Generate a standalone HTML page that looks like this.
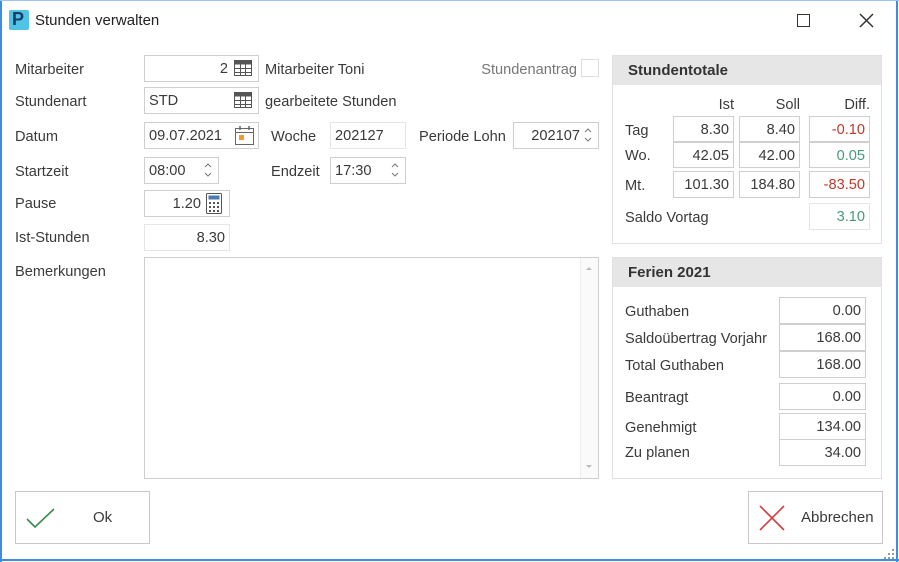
<!DOCTYPE html>
<html><head><meta charset="utf-8"><style>
*{box-sizing:border-box;margin:0;padding:0}
body{width:899px;height:562px;background:#fff;position:relative;overflow:hidden;font-family:"Liberation Sans",sans-serif;font-size:14.6px;color:#3a3a3a}
.a{position:absolute;white-space:nowrap}
.l{position:absolute;line-height:18px;white-space:nowrap;margin-top:1px}
.f{position:absolute;border:1px solid #cfcfcf;background:#fff;line-height:20px;padding:3px 4px 0;font-size:14.6px;color:#3a3a3a;white-space:nowrap}
.r{text-align:right}
.lt{border-color:#e6e6e6}
.panel{position:absolute;border:1px solid #e0e0e0;background:#fff}
.ph{position:absolute;left:0;right:0;top:0;height:29px;background:#e6e6e6;font-weight:bold;font-size:15px;padding-left:15px;line-height:29px;color:#333}
.btn{position:absolute;border:1px solid #c8c8c8;background:#fff}
.spin{position:absolute;right:6px;top:4px;width:8px;height:16px}
</style></head><body>
<div class="a" style="left:0;top:0;width:2px;height:562px;background:#3c8ee0"></div>
<div class="a" style="left:896px;top:0;width:2px;height:562px;background:#3c8ee0"></div>
<div class="a" style="left:0;top:559px;width:899px;height:2px;background:#3c8ee0"></div>
<div class="a" style="left:0;top:0;width:899px;height:1px;background:#9cc4ee"></div>

<div class="a" style="left:9px;top:10px;width:20px;height:20px;background:#50c4e4;border-radius:2px"></div>
<div class="a" style="left:12px;top:8px;font-size:18px;font-weight:bold;color:#1b3b6a;line-height:22px">P</div>
<div class="a" style="left:35px;top:12px;font-size:15px;color:#222">Stunden verwalten</div>
<div class="a" style="left:797px;top:14px;width:13px;height:13px;border:1.5px solid #333"></div>
<svg class="a" style="left:859px;top:13px" width="15" height="15"><path d="M1 1L14 14M14 1L1 14" stroke="#333" stroke-width="1.5"/></svg>

<div class="l" style="left:15px;top:60px">Mitarbeiter</div>
<div class="l" style="left:15px;top:92px">Stundenart</div>
<div class="l" style="left:15px;top:127px">Datum</div>
<div class="l" style="left:15px;top:162px">Startzeit</div>
<div class="l" style="left:15px;top:194px">Pause</div>
<div class="l" style="left:15px;top:228px">Ist-Stunden</div>
<div class="l" style="left:15px;top:262px">Bemerkungen</div>

<div class="f r" style="left:144px;top:55px;width:115px;height:27px;padding-right:30px">2</div>
<div class="f" style="left:144px;top:87px;width:115px;height:27px">STD</div>
<div class="f" style="left:144px;top:122px;width:115px;height:27px">09.07.2021</div>
<div class="f" style="left:144px;top:157px;width:75px;height:27px">08:00<svg class="spin"><path d="M1 5L4 2L7 5M1 11L4 14L7 11" stroke="#777" fill="none"/></svg></div>
<div class="f r" style="left:144px;top:190px;width:86px;height:27px;padding-right:28px">1.20</div>
<div class="f r lt" style="left:144px;top:224px;width:86px;height:27px">8.30</div>
<div class="f" style="left:144px;top:257px;width:455px;height:222px"></div>
<div class="a" style="left:580px;top:258px;width:18px;height:220px;background:#fafafa;border-left:1px solid #eee"></div>
<svg class="a" style="left:584px;top:262px" width="10" height="210"><path d="M2 8L5 5L8 8" fill="#bbb"/><path d="M2 203L5 206L8 203" fill="#bbb"/></svg>

<svg class="a" style="left:234px;top:60px" width="19" height="17"><rect x="0.5" y="0.5" width="17" height="15" fill="none" stroke="#555"/><rect x="0.5" y="0.5" width="17" height="4" fill="#555"/><path d="M0 8.5H18M0 12.5H18M6.5 4V16M11.5 4V16" stroke="#555"/></svg>
<svg class="a" style="left:234px;top:92px" width="19" height="17"><rect x="0.5" y="0.5" width="17" height="15" fill="none" stroke="#555"/><rect x="0.5" y="0.5" width="17" height="4" fill="#555"/><path d="M0 8.5H18M0 12.5H18M6.5 4V16M11.5 4V16" stroke="#555"/></svg>
<svg class="a" style="left:235px;top:126px" width="20" height="19"><rect x="0.5" y="2.5" width="18" height="16" fill="none" stroke="#666"/><path d="M0 6.5H19" stroke="#666"/><path d="M5 0V4M14 0V4" stroke="#666" stroke-width="1.5"/><rect x="4" y="9" width="5" height="5" fill="#f39a2b"/></svg>
<svg class="a" style="left:206px;top:193px" width="16" height="21"><rect x="0.5" y="0.5" width="15" height="20" rx="1" fill="none" stroke="#555"/><rect x="2.5" y="2.5" width="11" height="4" fill="#4b7ab0"/><g fill="#555"><rect x="3" y="9" width="2" height="2"/><rect x="7" y="9" width="2" height="2"/><rect x="11" y="9" width="2" height="2"/><rect x="3" y="13" width="2" height="2"/><rect x="7" y="13" width="2" height="2"/><rect x="11" y="13" width="2" height="2"/><rect x="3" y="17" width="2" height="2"/><rect x="7" y="17" width="2" height="2"/><rect x="11" y="17" width="2" height="2"/></g></svg>

<div class="l" style="left:265px;top:60px">Mitarbeiter Toni</div>
<div class="l" style="left:265px;top:92px">gearbeitete Stunden</div>
<div class="l" style="left:271px;top:127px">Woche</div>
<div class="f lt" style="left:330px;top:122px;width:76px;height:27px">202127</div>
<div class="l" style="left:419px;top:127px">Periode Lohn</div>
<div class="f r" style="left:513px;top:122px;width:86px;height:27px;padding-right:18px">202107<svg class="spin"><path d="M1 5L4 2L7 5M1 11L4 14L7 11" stroke="#777" fill="none"/></svg></div>
<div class="l" style="left:271px;top:162px">Endzeit</div>
<div class="f" style="left:330px;top:157px;width:76px;height:27px">17:30<svg class="spin"><path d="M1 5L4 2L7 5M1 11L4 14L7 11" stroke="#777" fill="none"/></svg></div>
<div class="l" style="left:478px;top:60px;color:#777;width:99px;text-align:right">Stundenantrag</div>
<div class="a" style="left:581px;top:59px;width:18px;height:18px;border:1px solid #ddd"></div>

<div class="panel" style="left:612px;top:55px;width:270px;height:189px">
<div class="ph">Stundentotale</div></div>
<div class="l" style="left:700px;top:95px;width:34px;text-align:right">Ist</div>
<div class="l" style="left:760px;top:95px;width:40px;text-align:right">Soll</div>
<div class="l" style="left:820px;top:95px;width:50px;text-align:right">Diff.</div>
<div class="l" style="left:625px;top:121px">Tag</div>
<div class="l" style="left:625px;top:146px">Wo.</div>
<div class="l" style="left:625px;top:176px">Mt.</div>
<div class="l" style="left:625px;top:208px">Saldo Vortag</div>
<div class="f r" style="left:673px;top:116px;width:61px;height:26px">8.30</div>
<div class="f r" style="left:739px;top:116px;width:61px;height:26px">8.40</div>
<div class="f r" style="left:809px;top:116px;width:61px;height:26px;color:#c0392b">-0.10</div>
<div class="f r" style="left:673px;top:142px;width:61px;height:26px">42.05</div>
<div class="f r" style="left:739px;top:142px;width:61px;height:26px">42.00</div>
<div class="f r" style="left:809px;top:142px;width:61px;height:26px;color:#4a9a78">0.05</div>
<div class="f r" style="left:673px;top:171px;width:61px;height:27px">101.30</div>
<div class="f r" style="left:739px;top:171px;width:61px;height:27px">184.80</div>
<div class="f r" style="left:809px;top:171px;width:61px;height:27px;color:#c0392b">-83.50</div>
<div class="f r lt" style="left:809px;top:203px;width:61px;height:27px;color:#4a9a78">3.10</div>

<div class="panel" style="left:612px;top:257px;width:270px;height:222px">
<div class="ph">Ferien 2021</div></div>
<div class="l" style="left:625px;top:302px">Guthaben</div>
<div class="l" style="left:625px;top:329px">Saldoübertrag Vorjahr</div>
<div class="l" style="left:625px;top:356px">Total Guthaben</div>
<div class="l" style="left:625px;top:388px">Beantragt</div>
<div class="l" style="left:625px;top:418px">Genehmigt</div>
<div class="l" style="left:625px;top:443px">Zu planen</div>
<div class="f r" style="left:779px;top:297px;width:87px;height:27px">0.00</div>
<div class="f r" style="left:779px;top:324px;width:87px;height:27px">168.00</div>
<div class="f r" style="left:779px;top:351px;width:87px;height:27px">168.00</div>
<div class="f r" style="left:779px;top:383px;width:87px;height:27px">0.00</div>
<div class="f r" style="left:779px;top:413px;width:87px;height:27px">134.00</div>
<div class="f r" style="left:779px;top:439px;width:87px;height:27px">34.00</div>

<div class="btn" style="left:15px;top:491px;width:135px;height:53px"></div>
<svg class="a" style="left:26px;top:507px" width="30" height="22"><path d="M1 12L9 20L28 2" stroke="#3a8a4a" stroke-width="1.6" fill="none"/></svg>
<div class="a" style="left:93px;top:509px;font-size:15px">Ok</div>
<div class="btn" style="left:748px;top:491px;width:135px;height:53px"></div>
<svg class="a" style="left:758px;top:504px" width="28" height="28"><path d="M2 2L26 26M26 2L2 26" stroke="#d83a3a" stroke-width="1.6"/></svg>
<div class="a" style="left:801px;top:509px;font-size:15px">Abbrechen</div>
<svg class="a" style="left:884px;top:548px" width="12" height="11"><g fill="#999"><rect x="8" y="1" width="2" height="2"/><rect x="4" y="5" width="2" height="2"/><rect x="8" y="5" width="2" height="2"/><rect x="0" y="9" width="2" height="2"/><rect x="4" y="9" width="2" height="2"/><rect x="8" y="9" width="2" height="2"/></g></svg>
</body></html>
